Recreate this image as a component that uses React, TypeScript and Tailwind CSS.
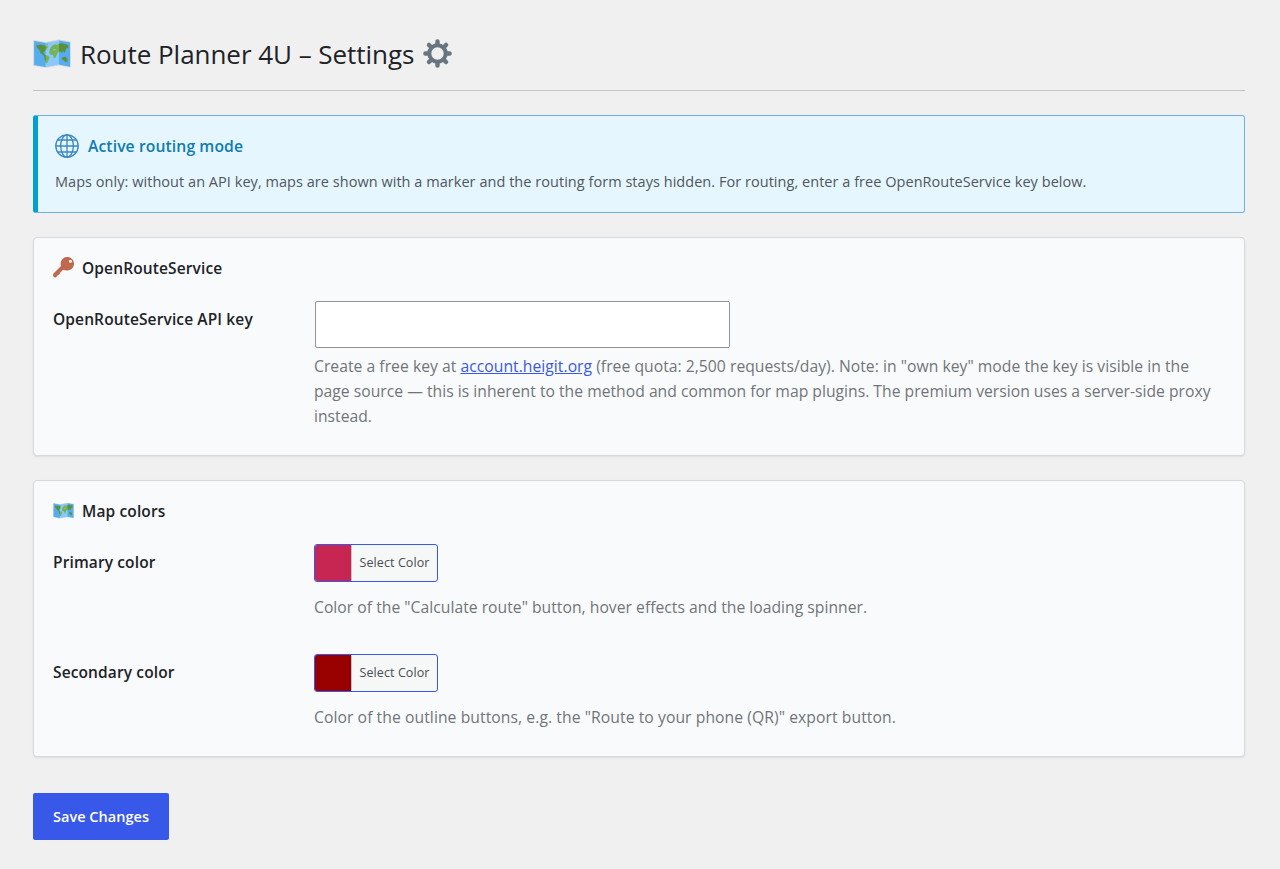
import type { ReactNode } from "react";

function MapIcon({ className }: { className: string }) {
  return (
    <svg viewBox="0 0 38 29" className={className} aria-hidden="true">
      <path fill="#ccd6dd" d="M.3 1 12.500 3 26 .4l11.700 2.200v26L26 26.500l-13.500 2.300L.3 26.700z" />
      <path fill="#55acee" d="M1.100 1.900 12.800 4v24L1.100 26z" />
      <path fill="#88c9f9" d="M12.800 4 26 1.400v24.200L12.800 28z" />
      <path fill="#55acee" d="M26 1.400 37 3.400v24.300l-11-2.100z" />
      <path fill="#5c913b" d="M3.200 6.200 8 5.800l4.800 1v4.400l-1.600 1.200-.8 1.600 1.700 1.800.7 1-.6 1.200-2.700-2.500-2-1.500-1.400-3.300-2.400-2.400z" />
      <path fill="#77b255" d="m12.800 6.400 1.800.3.300 1.600-2.100 2.900zM12.800 16.300l2.600.6 1.100 1.800-1.200 3-1.500 2.700-1-.4z" />
      <path fill="#5c913b" d="m11.200 16.800 1.600-.5v7.700l-1.200-4.200z" />
      <path fill="#77b255" d="m17 10 2-3.200 2.800-1.600 2 .6L26 4.800v8.700l-1-.4-1.100 2.300-1.300 3.200-1.700 1-.8-3.400-3-.6-.9-2.200zM12 4.700l3.200-.2-1 1.400z" />
      <path fill="#5c913b" d="m26 4.800 3.200-.6 4.600 1.200 1.800 1.500-.6 2.700-1.300-.9-1 2.300-1 3-1.600-1.900-1.200 2.200-1.500-2.200-1.400 1.400zM29.200 18.300l3.300-.5 2 1.900-.2 2.900-2.100.4-.9-1.600-2.300-.6z" />
      <path fill="#88c9f9" d="m20.200 10.600 2.700-.6-.2 1.100-2.100.4z" />
    </svg>
  );
}

function GearIcon({ className }: { className: string }) {
  return (
    <svg viewBox="-18 -18 36 36" className={className} aria-hidden="true">
      <circle r="10.200" fill="none" stroke="#66757f" strokeWidth="5" />
      <g stroke="#66757f" strokeWidth="5.500" strokeLinecap="round">
        <path d="M0-15V-12.500M0 15V12.500M-15 0H-12.500M15 0H12.500M-10.600-10.600-9-9M10.600 10.600 9 9M-10.600 10.600-9 9M10.600-10.600 9-9" />
      </g>
    </svg>
  );
}

function GlobeIcon({ className }: { className: string }) {
  return (
    <svg viewBox="0 0 36 36" className={className} fill="none" stroke="#3b88c3" strokeWidth="2" aria-hidden="true">
      <circle cx="18" cy="18" r="16.800" />
      <ellipse cx="18" cy="18" rx="9.500" ry="16.800" />
      <path d="M18 1v34M1 18h34M4.500 9h27M4.500 27h27" />
    </svg>
  );
}

function KeyIcon({ className }: { className: string }) {
  return (
    <svg viewBox="0 0 36 36" className={className} aria-hidden="true">
      <path
        fill="#c1694f"
        fillRule="evenodd"
        d="M32.600 3.300c-4.500-4.500-11.700-4.500-16.200 0-3.300 3.300-4.100 8.200-2.600 12.200L1.300 28C-.1 29.400-.2 32 .7 33.500c.8 1.600 3 2.300 4.600 1.300 1.100-.7 1-1.800 2.200-2.900 1-.9 2.200-.7 3.200-1.800.9-1 .7-2.200 1.600-3.200l5-5.100c4.700 2.300 11.300 1.700 15.300-2.300 4.500-4.500 4.500-11.700 0-16.200zM29.900 10a2.700 2.700 0 1 1 0-5.400 2.700 2.700 0 0 1 0 5.400z"
      />
    </svg>
  );
}

function Card({ icon, title, className, children }: { icon: ReactNode; title: string; className: string; children: ReactNode }) {
  return (
    <section className={`rounded-[4px] border border-[#d5dade] bg-[#f8fafc] px-[19px] pt-[17px] shadow-[0_1px_2px_rgba(0,0,0,0.08)] ${className}`}>
      <h2 className="flex h-[25px] items-center gap-2 text-[15.500px] font-semibold tracking-[0.13px] text-[#1d2327]">
        {icon}
        <span className="pt-[2px]">{title}</span>
      </h2>
      {children}
    </section>
  );
}

function ColorRow({ label, swatch, hint, hintClass }: { label: string; swatch: string; hint: string; hintClass: string }) {
  return (
    <div className="flex h-[110px]">
      <div className="w-[261px] shrink-0 pt-[6px] text-[15.500px] leading-6 font-semibold tracking-[0.12px] text-[#1d2327]">{label}</div>
      <div>
        <button className="flex h-[38px] w-[124px] rounded-[3px] border border-[#3858e9] bg-[#f6f7f7]">
          <span className={`h-full w-9 rounded-l-[2px] ${swatch}`} />
          <span className="flex h-full flex-1 items-center justify-center border-l border-[#c3c4c7] pt-px text-[12.500px] font-medium tracking-[0.1px] whitespace-nowrap text-[#474d53]">
            Select Color
          </span>
        </button>
        <p className={`mt-[13px] text-[15.700px] leading-6 whitespace-nowrap text-[#71757a] ${hintClass}`}>{hint}</p>
      </div>
    </div>
  );
}

export default function App() {
  return (
    <main className="h-[869px] w-[1280px] bg-[#f0f0f0] pt-[34px] pr-[35px] pl-[33px] font-['Open_Sans','Noto_Sans',sans-serif]">
      <header className="flex h-[57px] items-start border-b border-[#c3c4c7]">
        <MapIcon className="mt-[5px] h-[29px] w-[38px]" />
        <h1 className="ml-[9px] text-[26px] leading-10 tracking-[-0.04px] whitespace-nowrap text-[#1d2327]">Route Planner 4U – Settings</h1>
        <GearIcon className="mt-[5px] ml-[9px] h-[29px] w-[29px]" />
      </header>

      <section className="mt-6 h-[98px] rounded-[3px] border border-l-[5px] border-[#72aee6] border-l-[#00a0d2] bg-[#e5f6ff] pt-[17px] pl-[17px]">
        <h2 className="flex h-[25px] items-center gap-[9px] text-[15.700px] font-semibold tracking-[0.1px] text-[#0f7bb0]">
          <GlobeIcon className="h-6 w-6" />
          <span className="pt-[2px]">Active routing mode</span>
        </h2>
        <p className="mt-[12px] text-[14.500px] leading-6 tracking-[0.04px] whitespace-nowrap text-[#50575e]">
          Maps only: without an API key, maps are shown with a marker and the routing form stays hidden. For routing, enter a free OpenRouteService key below.
        </p>
      </section>

      <Card icon={<KeyIcon className="h-[21px] w-[21px]" />} title="OpenRouteService" className="mt-6 h-[219px]">
        <div className="mt-[21px] flex">
          <label htmlFor="api-key" className="w-[261px] shrink-0 pt-[6px] text-[15.500px] leading-6 font-semibold tracking-[0.12px] text-[#1d2327]">
            OpenRouteService API key
          </label>
          <div>
            <input id="api-key" className="ml-px block h-[47px] w-[415px] rounded-[2px] border border-[#949494] bg-white px-3 text-[16px] outline-none" />
            <div className="mt-[6px] text-[15.700px] leading-[25px] whitespace-nowrap text-[#71757a]">
              <p className="tracking-[0.03px]">
                Create a free key at <a className="text-[#3858e9] underline" href="#">account.heigit.org</a> (free quota: 2,500 requests/day). Note: in "own key" mode the key is visible in the
              </p>
              <p className="tracking-[0.01px]">page source — this is inherent to the method and common for map plugins. The premium version uses a server-side proxy</p>
              <p>instead.</p>
            </div>
          </div>
        </div>
      </Card>

      <Card icon={<MapIcon className="h-[17px] w-[21px]" />} title="Map colors" className="mt-6 h-[277px]">
        <div className="mt-[21px]">
          <ColorRow label="Primary color" swatch="bg-[#c72652]" hint={'Color of the "Calculate route" button, hover effects and the loading spinner.'} hintClass="tracking-[0.02px]" />
          <ColorRow label="Secondary color" swatch="bg-[#990000]" hint={'Color of the outline buttons, e.g. the "Route to your phone (QR)" export button.'} hintClass="tracking-[0.07px]" />
        </div>
      </Card>

      <button className="mt-9 flex h-[47px] w-[136px] items-center justify-center rounded-[2px] bg-[#3858e9] text-[14.500px] font-semibold tracking-[0.03px] whitespace-nowrap text-white">
        Save Changes
      </button>
    </main>
  );
}
